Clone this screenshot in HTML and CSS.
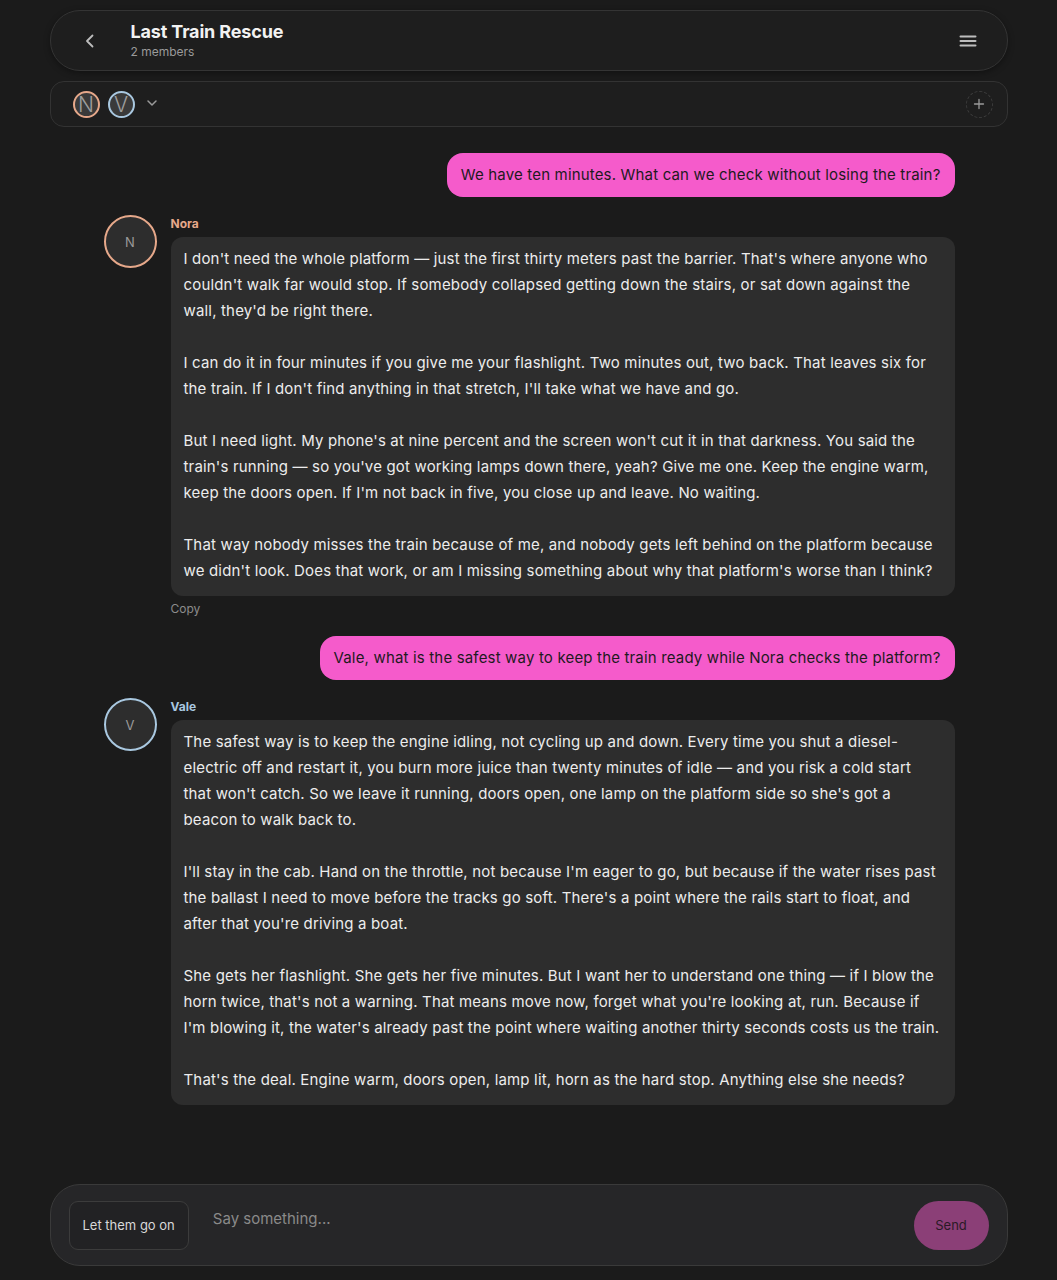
FILE: index.html
```html
<!DOCTYPE html>
<html>
<head>
<meta charset="utf-8">
<link rel="stylesheet" href="styles.css">
</head>
<body>
<div class="app">
  <header class="topbar">
    <button class="icon-btn back" aria-label="Back">
      <svg width="20" height="20" viewBox="0 0 20 20"><path d="M12.5 4.5 7 10l5.5 5.5" fill="none" stroke="#bdbdbd" stroke-width="1.8" stroke-linecap="round" stroke-linejoin="round"/></svg>
    </button>
    <div class="title-wrap">
      <div class="title">Last Train Rescue</div>
      <div class="subtitle">2 members</div>
    </div>
    <button class="icon-btn menu" aria-label="Menu">
      <svg width="20" height="20" viewBox="0 0 20 20"><path d="M2.5 5.5h15M2.5 10h15M2.5 14.5h15" stroke="#bdbdbd" stroke-width="2" stroke-linecap="round"/></svg>
    </button>
  </header>

  <div class="members">
    <span class="mini-av nora">N</span>
    <span class="mini-av vale">V</span>
    <svg class="chev" width="14" height="14" viewBox="0 0 14 14"><path d="M3 5l4 4 4-4" fill="none" stroke="#9a9a9a" stroke-width="1.5" stroke-linecap="round" stroke-linejoin="round"/></svg>
    <span class="spacer"></span>
    <button class="add-btn" aria-label="Add">
      <svg width="12" height="12" viewBox="0 0 12 12"><path d="M6 1.5v9M1.5 6h9" stroke="#9a9a9a" stroke-width="1.3" stroke-linecap="round"/></svg>
    </button>
  </div>

  <main class="thread">
    <div class="msg user"><div class="bubble user-bubble">We have ten minutes. What can we check without losing the train?</div></div>

    <div class="msg bot">
      <div class="avatar nora">N</div>
      <div class="bot-body">
        <div class="name nora-name">Nora</div>
        <div class="bubble bot-bubble">
          <p>I don't need the whole platform — just the first thirty meters past the barrier. That's where anyone who couldn't walk far would stop. If somebody collapsed getting down the stairs, or sat down against the wall, they'd be right there.</p>
          <p>I can do it in four minutes if you give me your flashlight. Two minutes out, two back. That leaves six for the train. If I don't find anything in that stretch, I'll take what we have and go.</p>
          <p>But I need light. My phone's at nine percent and the screen won't cut it in that darkness. You said the train's running — so you've got working lamps down there, yeah? Give me one. Keep the engine warm, keep the doors open. If I'm not back in five, you close up and leave. No waiting.</p>
          <p>That way nobody misses the train because of me, and nobody gets left behind on the platform because we didn't look. Does that work, or am I missing something about why that platform's worse than I think?</p>
        </div>
        <div class="copy">Copy</div>
      </div>
    </div>

    <div class="msg user"><div class="bubble user-bubble">Vale, what is the safest way to keep the train ready while Nora checks the platform?</div></div>

    <div class="msg bot">
      <div class="avatar vale">V</div>
      <div class="bot-body">
        <div class="name vale-name">Vale</div>
        <div class="bubble bot-bubble">
          <p>The safest way is to keep the engine idling, not cycling up and down. Every time you shut a diesel-electric off and restart it, you burn more juice than twenty minutes of idle — and you risk a cold start that won't catch. So we leave it running, doors open, one lamp on the platform side so she's got a beacon to walk back to.</p>
          <p>I'll stay in the cab. Hand on the throttle, not because I'm eager to go, but because if the water rises past the ballast I need to move before the tracks go soft. There's a point where the rails start to float, and after that you're driving a boat.</p>
          <p>She gets her flashlight. She gets her five minutes. But I want her to understand one thing — if I blow the horn twice, that's not a warning. That means move now, forget what you're looking at, run. Because if I'm blowing it, the water's already past the point where waiting another thirty seconds costs us the train.</p>
          <p>That's the deal. Engine warm, doors open, lamp lit, horn as the hard stop. Anything else she needs?</p>
        </div>
      </div>
    </div>
  </main>

  <footer class="composer">
    <button class="nudge">Let them go on</button>
    <div class="input">Say something...</div>
    <button class="send">Send</button>
  </footer>
</div>
</body>
</html>
```

FILE: styles.css
```css
* { box-sizing: border-box; }
html, body { margin: 0; padding: 0; }
body {
  background: #1b1b1b;
  color: #e8e8e8;
  font-family: Inter, "Liberation Sans", sans-serif;
  width: 1057px;
  height: 1280px;
  overflow: hidden;
}
button { font-family: inherit; cursor: pointer; }
.app {
  width: 958px;
  margin: 0 auto;
  padding-top: 10px;
  height: 1280px;
  display: flex;
  flex-direction: column;
}
.topbar {
  height: 61px;
  border: 1px solid #343434;
  border-radius: 30px;
  background: #1e1e1e;
  display: flex;
  align-items: center;
  padding: 0 28px 0 28px;
  box-shadow: 0 2px 6px rgba(0,0,0,0.35);
}
.icon-btn {
  background: none;
  border: 0;
  padding: 0;
  width: 22px;
  height: 22px;
  display: flex;
  align-items: center;
  justify-content: center;
}
.back { margin-right: 30px; }
.title-wrap { flex: 1; display: flex; flex-direction: column; padding-top: 3px; }
.title { font-size: 18px; font-weight: 700; color: #f2f2f2; line-height: 22px; margin-top: -3px; letter-spacing: -0.15px; }
.subtitle { font-size: 12px; color: #9a9a9a; line-height: 16px; margin-top: 1px; }
.members {
  margin-top: 10px;
  height: 46px;
  border: 1px solid #333;
  border-radius: 14px;
  background: #1e1e1e;
  display: flex;
  align-items: center;
  padding: 0 14px 0 22px;
}
.mini-av {
  width: 27px; height: 27px;
  border-radius: 50%;
  background: #3a3a3a;
  color: #9e9e9e;
  display: flex; align-items: center; justify-content: center;
  font-size: 21px;
  font-weight: 300;
  line-height: 1;
  border: 2px solid;
  margin-right: 8px;
}
.mini-av.nora { border-color: #e6a88a; }
.mini-av.vale { border-color: #a9c8e0; }
.chev { margin-left: 2px; margin-top: -2px; }
.spacer { flex: 1; }
.add-btn {
  width: 27px; height: 27px;
  border-radius: 50%;
  border: 1px dashed #3c3c3c;
  background: none;
  display: flex; align-items: center; justify-content: center;
  padding: 0;
}
.thread {
  flex: 1;
  padding: 26px 53px 0 54px;
}
.msg { display: flex; }
.msg.user { justify-content: flex-end; margin-bottom: 18px; }
.bubble { font-size: 15px; line-height: 26px; letter-spacing: 0.17px; }
.user-bubble {
  background: #f55bcb;
  color: #1e1a1e;
  border-radius: 16px;
  padding: 9px 14px;
}
.msg.bot { margin-bottom: 19px; }
.avatar {
  width: 53px; height: 53px;
  flex: none;
  border-radius: 50%;
  border: 2px solid;
  background: #2d2d2d;
  color: #9a9a9a;
  font-size: 13px;
  display: flex; align-items: center; justify-content: center;
  margin-right: 14px;
  margin-top: 0;
}
.avatar.nora { border-color: #e6a88a; }
.avatar.vale { border-color: #a9c8e0; }
.bot-body { flex: 1; min-width: 0; }
.name { font-size: 12px; font-weight: 700; line-height: 16px; margin-top: 1px; margin-bottom: 5px; }
.nora-name { color: #e6a88a; }
.vale-name { color: #a9c8e0; }
.bot-bubble {
  background: #2d2d2d;
  color: #ececec;
  border-radius: 12px;
  padding: 9px 13px 12px;
}
.bot-bubble p { margin: 0 0 26px; }
.bot-bubble p:last-child { margin-bottom: 0; }
.copy { font-size: 12px; color: #8c8c8c; margin-top: 5px; line-height: 16px; }
.composer {
  margin-bottom: 14px;
  height: 82px;
  border: 1px solid #3a3a3a;
  border-radius: 30px;
  background: #262628;
  display: flex;
  align-items: center;
  padding: 0 18px 0 18px;
}
.nudge {
  height: 49px;
  padding: 0 13px;
  border-radius: 9px;
  border: 1px solid #3c3c3c;
  background: #222224;
  color: #d8d8d8;
  font-size: 13px;
}
.input {
  flex: 1;
  align-self: flex-start;
  margin-top: 24px;
  padding-left: 24px;
  color: #8a8a8a;
  font-size: 15px;
  line-height: 20px;
}
.send {
  width: 75px;
  height: 49px;
  border-radius: 25px;
  border: 0;
  background: #8b3f77;
  color: #2a1a26;
  font-size: 13px;
}
```
